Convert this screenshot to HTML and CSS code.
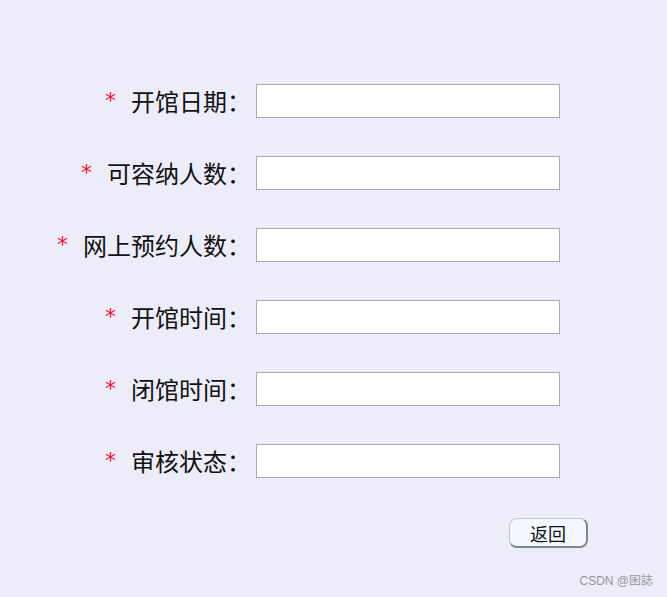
FILE: index.html
```html
<!DOCTYPE html>
<html lang="zh">
<head>
<meta charset="utf-8">
<link rel="stylesheet" href="styles.css">
</head>
<body>
<div class="page">
  <form class="form">
    <label class="label"><span class="req">*</span>开馆日期：</label><input class="field" type="text">
    <label class="label"><span class="req">*</span>可容纳人数：</label><input class="field" type="text">
    <label class="label"><span class="req">*</span>网上预约人数：</label><input class="field" type="text">
    <label class="label"><span class="req">*</span>开馆时间：</label><input class="field" type="text">
    <label class="label"><span class="req">*</span>闭馆时间：</label><input class="field" type="text">
    <label class="label"><span class="req">*</span>审核状态：</label><input class="field" type="text">
  </form>
  <div class="actions"><button class="back" type="button">返回</button></div>
  <div class="watermark">CSDN @囷誌</div>
</div>
</body>
</html>
```
FILE: styles.css
```css
html, body {
  margin: 0;
  padding: 0;
  background: #ecedf9;
}
.page {
  position: relative;
  width: 667px;
  height: 597px;
  font-family: "Noto Sans CJK SC", "Liberation Serif", serif;
  color: #111;
}
.form {
  display: grid;
  grid-template-columns: 256px 304px;
  grid-auto-rows: 34px;
  row-gap: 38px;
  padding-top: 84px;
  align-items: center;
}
.label {
  justify-self: end;
  padding-right: 5px;
  font-size: 24px;
  line-height: 34px;
  white-space: nowrap;
  display: flex;
  align-items: center;
}
.req {
  color: #f0142d;
  font-size: 22px;
  margin-right: 15px;
  font-family: "DejaVu Sans", sans-serif;
}
.field {
  box-sizing: border-box;
  height: 34px;
  width: 304px;
  margin: 0;
  border: 1px solid #a7a7ad;
  background: #fff;
  padding: 0 4px;
}
.actions {
  padding-top: 40px;
  padding-left: 509px;
}
.back {
  box-sizing: border-box;
  width: 79px;
  height: 30px;
  border: 1px solid #c4c4c8;
  border-right: 2px solid #858585;
  border-bottom: 2px solid #858585;
  border-radius: 8px;
  background: #f3f8ff;
  font-family: "Noto Sans CJK SC", serif;
  font-size: 18px;
  line-height: 24px;
  padding: 0;
  color: #111;
}
.watermark {
  position: absolute;
  right: 14px;
  bottom: 9px;
  font-family: "Liberation Sans", "Noto Sans CJK SC", sans-serif;
  font-size: 12px;
  color: #999;
}
```
